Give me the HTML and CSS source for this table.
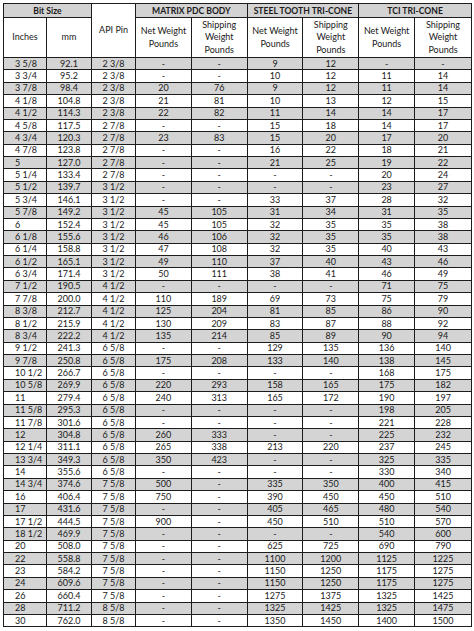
FILE: index.html
```html
<!DOCTYPE html>
<html>
<head>
<meta charset="utf-8">
<link rel="stylesheet" href="styles.css">
</head>
<body>
<table class="bits">
<colgroup>
<col class="c-in"><col class="c-mm"><col class="c-api"><col class="c-w1"><col class="c-w1"><col class="c-w1"><col class="c-w1"><col class="c-w1"><col class="c-w2">
</colgroup>
<thead>
<tr class="h1">
<th colspan="2" class="grp">Bit Size</th>
<th rowspan="2" class="api">API Pin</th>
<th colspan="2" class="grp">MATRIX PDC BODY</th>
<th colspan="2" class="grp">STEEL TOOTH TRI-CONE</th>
<th colspan="2" class="grp">TCI TRI-CONE</th>
</tr>
<tr class="h2">
<th>Inches</th><th>mm</th>
<th>Net Weight<br>Pounds</th><th>Shipping<br>Weight<br>Pounds</th>
<th>Net Weight<br>Pounds</th><th>Shipping<br>Weight<br>Pounds</th>
<th>Net Weight<br>Pounds</th><th>Shipping<br>Weight<br>Pounds</th>
</tr>
</thead>
<tbody>
<tr><td>3 5/8</td><td>92.1</td><td>2 3/8</td><td>-</td><td>-</td><td>9</td><td>12</td><td>-</td><td>-</td></tr>
<tr><td>3 3/4</td><td>95.2</td><td>2 3/8</td><td>-</td><td>-</td><td>10</td><td>12</td><td>11</td><td>14</td></tr>
<tr><td>3 7/8</td><td>98.4</td><td>2 3/8</td><td>20</td><td>76</td><td>9</td><td>12</td><td>11</td><td>14</td></tr>
<tr><td>4 1/8</td><td>104.8</td><td>2 3/8</td><td>21</td><td>81</td><td>10</td><td>13</td><td>12</td><td>15</td></tr>
<tr><td>4 1/2</td><td>114.3</td><td>2 3/8</td><td>22</td><td>82</td><td>11</td><td>14</td><td>14</td><td>17</td></tr>
<tr><td>4 5/8</td><td>117.5</td><td>2 7/8</td><td>-</td><td>-</td><td>15</td><td>18</td><td>14</td><td>17</td></tr>
<tr><td>4 3/4</td><td>120.3</td><td>2 7/8</td><td>23</td><td>83</td><td>15</td><td>20</td><td>17</td><td>20</td></tr>
<tr><td>4 7/8</td><td>123.8</td><td>2 7/8</td><td>-</td><td>-</td><td>16</td><td>22</td><td>18</td><td>21</td></tr>
<tr><td>5</td><td>127.0</td><td>2 7/8</td><td>-</td><td>-</td><td>21</td><td>25</td><td>19</td><td>22</td></tr>
<tr><td>5 1/4</td><td>133.4</td><td>2 7/8</td><td>-</td><td>-</td><td>-</td><td>-</td><td>20</td><td>24</td></tr>
<tr><td>5 1/2</td><td>139.7</td><td>3 1/2</td><td>-</td><td>-</td><td>-</td><td>-</td><td>23</td><td>27</td></tr>
<tr><td>5 3/4</td><td>146.1</td><td>3 1/2</td><td>-</td><td>-</td><td>33</td><td>37</td><td>28</td><td>32</td></tr>
<tr><td>5 7/8</td><td>149.2</td><td>3 1/2</td><td>45</td><td>105</td><td>31</td><td>34</td><td>31</td><td>35</td></tr>
<tr><td>6</td><td>152.4</td><td>3 1/2</td><td>45</td><td>105</td><td>32</td><td>35</td><td>35</td><td>38</td></tr>
<tr><td>6 1/8</td><td>155.6</td><td>3 1/2</td><td>46</td><td>106</td><td>32</td><td>35</td><td>35</td><td>38</td></tr>
<tr><td>6 1/4</td><td>158.8</td><td>3 1/2</td><td>47</td><td>108</td><td>32</td><td>35</td><td>40</td><td>43</td></tr>
<tr><td>6 1/2</td><td>165.1</td><td>3 1/2</td><td>49</td><td>110</td><td>37</td><td>40</td><td>43</td><td>46</td></tr>
<tr><td>6 3/4</td><td>171.4</td><td>3 1/2</td><td>50</td><td>111</td><td>38</td><td>41</td><td>46</td><td>49</td></tr>
<tr><td>7 1/2</td><td>190.5</td><td>4 1/2</td><td>-</td><td>-</td><td>-</td><td>-</td><td>71</td><td>75</td></tr>
<tr><td>7 7/8</td><td>200.0</td><td>4 1/2</td><td>110</td><td>189</td><td>69</td><td>73</td><td>75</td><td>79</td></tr>
<tr><td>8 3/8</td><td>212.7</td><td>4 1/2</td><td>125</td><td>204</td><td>81</td><td>85</td><td>86</td><td>90</td></tr>
<tr><td>8 1/2</td><td>215.9</td><td>4 1/2</td><td>130</td><td>209</td><td>83</td><td>87</td><td>88</td><td>92</td></tr>
<tr><td>8 3/4</td><td>222.2</td><td>4 1/2</td><td>135</td><td>214</td><td>85</td><td>89</td><td>90</td><td>94</td></tr>
<tr><td>9 1/2</td><td>241.3</td><td>6 5/8</td><td>-</td><td>-</td><td>129</td><td>135</td><td>136</td><td>140</td></tr>
<tr><td>9 7/8</td><td>250.8</td><td>6 5/8</td><td>175</td><td>208</td><td>133</td><td>140</td><td>138</td><td>145</td></tr>
<tr><td>10 1/2</td><td>266.7</td><td>6 5/8</td><td>-</td><td>-</td><td>-</td><td>-</td><td>168</td><td>175</td></tr>
<tr><td>10 5/8</td><td>269.9</td><td>6 5/8</td><td>220</td><td>293</td><td>158</td><td>165</td><td>175</td><td>182</td></tr>
<tr><td>11</td><td>279.4</td><td>6 5/8</td><td>240</td><td>313</td><td>165</td><td>172</td><td>190</td><td>197</td></tr>
<tr><td>11 5/8</td><td>295.3</td><td>6 5/8</td><td>-</td><td>-</td><td>-</td><td>-</td><td>198</td><td>205</td></tr>
<tr><td>11 7/8</td><td>301.6</td><td>6 5/8</td><td>-</td><td>-</td><td>-</td><td>-</td><td>221</td><td>228</td></tr>
<tr><td>12</td><td>304.8</td><td>6 5/8</td><td>260</td><td>333</td><td>-</td><td>-</td><td>225</td><td>232</td></tr>
<tr><td>12 1/4</td><td>311.1</td><td>6 5/8</td><td>265</td><td>338</td><td>213</td><td>220</td><td>237</td><td>245</td></tr>
<tr><td>13 3/4</td><td>349.3</td><td>6 5/8</td><td>350</td><td>423</td><td>-</td><td>-</td><td>325</td><td>335</td></tr>
<tr><td>14</td><td>355.6</td><td>6 5/8</td><td>-</td><td>-</td><td>-</td><td>-</td><td>330</td><td>340</td></tr>
<tr><td>14 3/4</td><td>374.6</td><td>7 5/8</td><td>500</td><td>-</td><td>335</td><td>350</td><td>400</td><td>415</td></tr>
<tr><td>16</td><td>406.4</td><td>7 5/8</td><td>750</td><td>-</td><td>390</td><td>450</td><td>450</td><td>510</td></tr>
<tr><td>17</td><td>431.6</td><td>7 5/8</td><td>-</td><td>-</td><td>405</td><td>465</td><td>480</td><td>540</td></tr>
<tr><td>17 1/2</td><td>444.5</td><td>7 5/8</td><td>900</td><td>-</td><td>450</td><td>510</td><td>510</td><td>570</td></tr>
<tr><td>18 1/2</td><td>469.9</td><td>7 5/8</td><td>-</td><td>-</td><td>-</td><td>-</td><td>540</td><td>600</td></tr>
<tr><td>20</td><td>508.0</td><td>7 5/8</td><td>-</td><td>-</td><td>625</td><td>725</td><td>690</td><td>790</td></tr>
<tr><td>22</td><td>558.8</td><td>7 5/8</td><td>-</td><td>-</td><td>1100</td><td>1200</td><td>1125</td><td>1225</td></tr>
<tr><td>23</td><td>584.2</td><td>7 5/8</td><td>-</td><td>-</td><td>1150</td><td>1250</td><td>1175</td><td>1275</td></tr>
<tr><td>24</td><td>609.6</td><td>7 5/8</td><td>-</td><td>-</td><td>1150</td><td>1250</td><td>1175</td><td>1275</td></tr>
<tr><td>26</td><td>660.4</td><td>7 5/8</td><td>-</td><td>-</td><td>1275</td><td>1375</td><td>1325</td><td>1425</td></tr>
<tr><td>28</td><td>711.2</td><td>8 5/8</td><td>-</td><td>-</td><td>1325</td><td>1425</td><td>1325</td><td>1475</td></tr>
<tr><td>30</td><td>762.0</td><td>8 5/8</td><td>-</td><td>-</td><td>1350</td><td>1450</td><td>1400</td><td>1500</td></tr>
</tbody>
</table>
</body>
</html>
```
FILE: styles.css
```css
html, body {
  margin: 0;
  padding: 0;
  background: #ffffff;
}
body {
  padding: 3px 0 0 3px;
  font-family: Lato, "Open Sans", sans-serif;
  color: #1a1a1a;
}
.bits {
  border-collapse: collapse;
  table-layout: fixed;
  width: 468px;
  font-size: 9px;
}
.c-in { width: 43px; }
.c-mm { width: 45px; }
.c-api { width: 44px; }
.c-w1 { width: 55.8px; }
.c-w2 { width: 57px; }
.bits th,
.bits td {
  border: 1.5px solid #1c1c1c;
  padding: 0;
  text-align: center;
  vertical-align: middle;
  line-height: 10px;
  overflow: hidden;
  white-space: nowrap;
}
.bits th {
  font-weight: 400;
  line-height: 12.5px;
}
.h1 {
  height: 14px;
}
.h1 .grp {
  background: #d3d3d3;
  font-weight: 700;
  font-size: 8.6px;
  line-height: 12px;
}
.h2 {
  height: 40px;
}
.bits tbody tr {
  height: 12.39px;
}
.bits tbody tr:nth-child(odd) td {
  background: #d4d4d4;
}
.bits tbody td:first-child {
  text-align: left;
  padding-left: 11px;
}
```
